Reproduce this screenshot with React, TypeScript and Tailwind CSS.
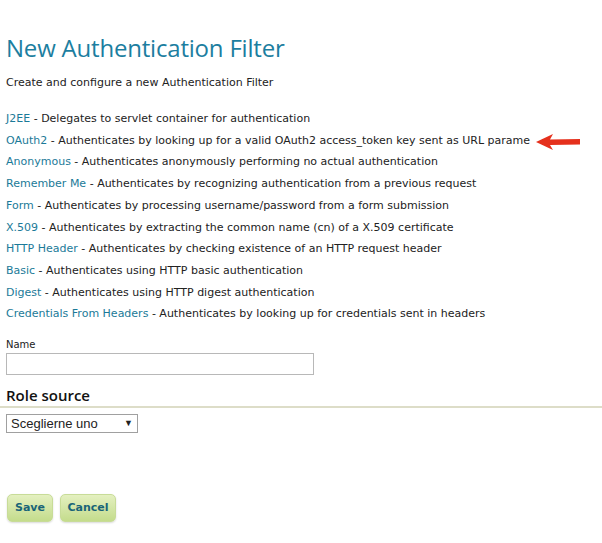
const filters = [
  ["J2EE", "Delegates to servlet container for authentication"],
  ["OAuth2", "Authenticates by looking up for a valid OAuth2 access_token key sent as URL parame"],
  ["Anonymous", "Authenticates anonymously performing no actual authentication"],
  ["Remember Me", "Authenticates by recognizing authentication from a previous request"],
  ["Form", "Authenticates by processing username/password from a form submission"],
  ["X.509", "Authenticates by extracting the common name (cn) of a X.509 certificate"],
  ["HTTP Header", "Authenticates by checking existence of an HTTP request header"],
  ["Basic", "Authenticates using HTTP basic authentication"],
  ["Digest", "Authenticates using HTTP digest authentication"],
  ["Credentials From Headers", "Authenticates by looking up for credentials sent in headers"],
];

function Arrow() {
  return (
    <svg width="46" height="18" viewBox="0 0 46 18" className="absolute left-[535px] top-[133px]">
      <path d="M1 9 L18 1 L15 6.5 L45 6 L45 11.5 L15 12 L18 17 Z" fill="#e5301c" />
    </svg>
  );
}

export default function App() {
  return (
    <div className="relative w-[602px] h-[543px] overflow-hidden bg-white text-[#222] font-['DejaVu_Sans',sans-serif]">
      <Arrow />
      <div className="px-[6px] pt-[33px]">
        <h1 className="text-[24px] leading-[30px] text-[#1c7ea0] font-['Open_Sans',sans-serif] tracking-[-0.2px]">
          New Authentication Filter
        </h1>
        <p className="mt-[12px] text-[11px] leading-[16px]">Create and configure a new Authentication Filter</p>
        <ul className="mt-[17px] w-[526px]">
          {filters.map(([name, desc]) => (
            <li key={name} className="whitespace-nowrap text-[11px] leading-[21.7px]">
              <a href="#" className="text-[#1b7a98]">{name}</a> - {desc}
            </li>
          ))}
        </ul>
        <label className="block mt-[13px] text-[10px] leading-[13px]">Name</label>
        <input className="mt-[2px] block w-[308px] h-[22px] border border-[#b8b8b8] bg-white" />
      </div>
      <h2 className="mt-[10px] px-[6px] text-[15px] leading-[20px] font-semibold text-[#111] font-['Open_Sans',sans-serif] border-b-2 border-[#ddddc8] pb-[1px]">
        Role source
      </h2>
      <div className="px-[6px] mt-[6px]">
        <div className="w-[132px] h-[19px] border border-[#a0a0a0] flex items-center justify-between px-[4px] text-[13px] font-['Liberation_Sans',sans-serif]">
          <span>Sceglierne uno</span>
          <span className="text-[9px]">▼</span>
        </div>
      </div>
      <div className="flex gap-[7px] px-[7px] mt-[61px]">
        <button className="h-[28px] w-[46px] rounded-[5px] border border-[#c8dc98] bg-gradient-to-b from-[#e4f0c0] to-[#c4dc8c] text-[11px] font-bold text-[#1a6478] shadow-[0_1px_2px_rgba(0,0,0,0.15)]">
          Save
        </button>
        <button className="h-[28px] w-[56px] rounded-[5px] border border-[#c8dc98] bg-gradient-to-b from-[#e4f0c0] to-[#c4dc8c] text-[11px] font-bold text-[#1a6478] shadow-[0_1px_2px_rgba(0,0,0,0.15)]">
          Cancel
        </button>
      </div>
    </div>
  );
}
